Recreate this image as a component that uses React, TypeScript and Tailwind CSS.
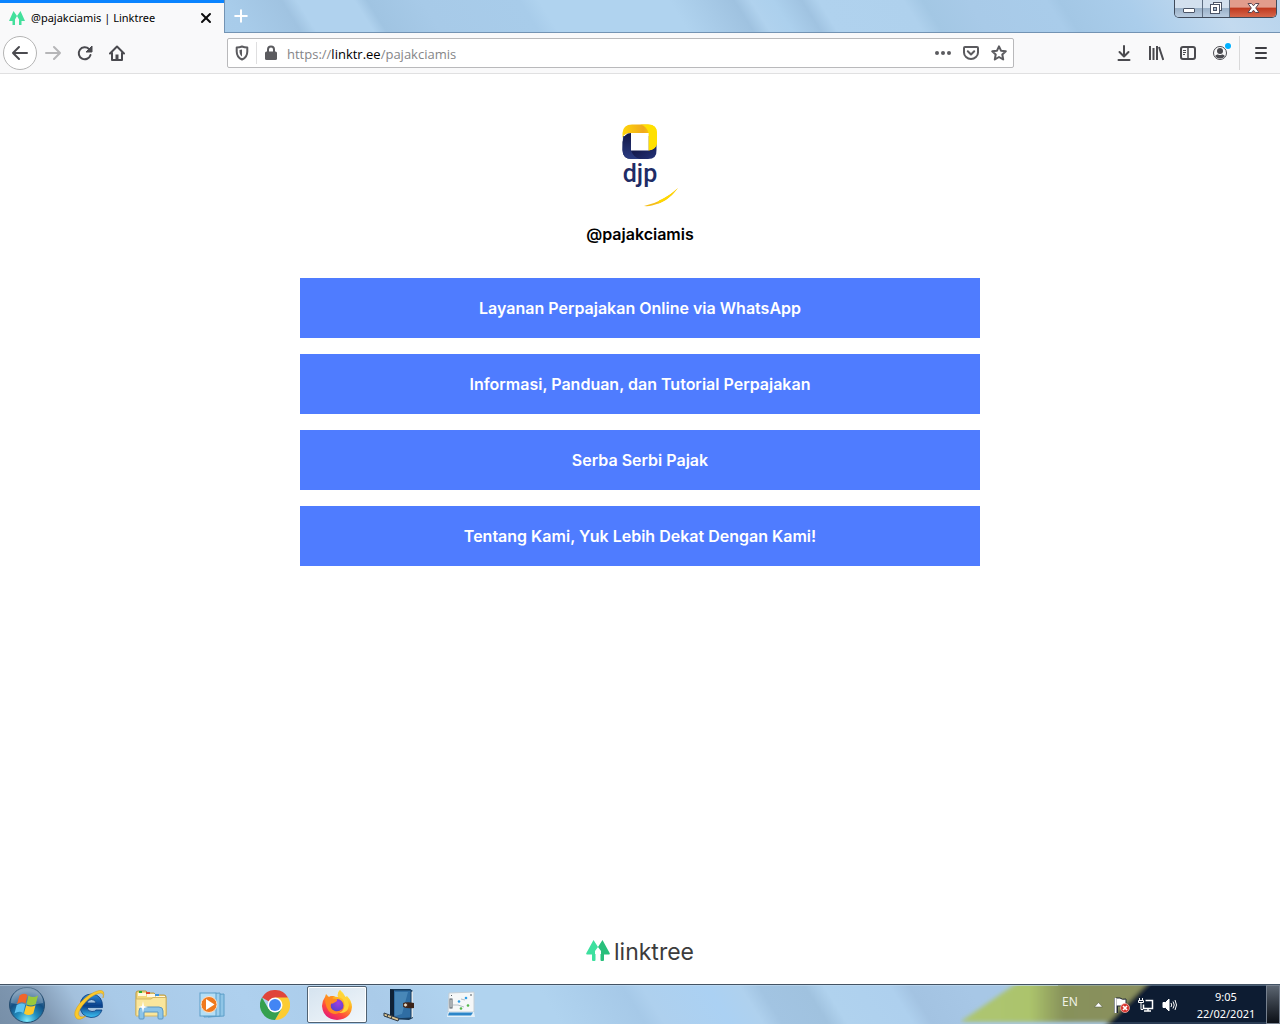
import React from 'react';
import { LuX, LuPlus } from 'react-icons/lu';

const links = [
  { title: 'Layanan Perpajakan Online via WhatsApp', href: '#whatsapp' },
  { title: 'Informasi, Panduan, dan Tutorial Perpajakan', href: '#informasi' },
  { title: 'Serba Serbi Pajak', href: '#serba-serbi' },
  { title: 'Tentang Kami, Yuk Lebih Dekat Dengan Kami!', href: '#tentang' },
];

function TreeIcon({ className }: { className?: string }) {
  return (
    <svg viewBox="0 0 24 21" className={className} aria-hidden="true">
      <path d="M7.500 0 L12 7 L9 11 V14 H9.500 V20 Q9.500 21 8.500 21 H7 Q6 21 6 20 V14.500 H1 Q-.3 14.500 .4 13 Z" fill="#3de09f" />
      <path d="M16.500 0 L23.600 13 Q24.300 14.500 23 14.500 H18 V20 Q18 21 17 21 H15.500 Q14.500 21 14.500 20 V14 H15 V11 L12 7 Z" fill="#28bf7b" />
    </svg>
  );
}

// Single-tone version used as the tab favicon
function Favicon() {
  return (
    <svg width="18" height="16" viewBox="0 0 18 16" fill="#43e09c" aria-hidden="true">
      <path d="M5.500 1 L9 6 L7 9.500 V15 H4.500 V11 H1 Z" />
      <path d="M12.500 1 L17 11 H13.500 V15 H11 V9.500 L9 6 Z" />
    </svg>
  );
}

function BackIcon() {
  return (
    <svg width="34" height="34" viewBox="0 0 34 34" fill="none">
      <circle cx="17" cy="17" r="16.500" fill="#fff" stroke="#b4b4b4" />
      <path d="M24 17 H10 M16 11 L10 17 L16 23" stroke="#4a4a4f" strokeWidth="2" strokeLinecap="round" strokeLinejoin="round" />
    </svg>
  );
}

function ForwardIcon() {
  return (
    <svg width="16" height="16" viewBox="0 0 16 16" fill="none" stroke="#b6b6b8" strokeWidth="2" strokeLinecap="round" strokeLinejoin="round">
      <path d="M1 8 H15 M9 2 L15 8 L9 14" />
    </svg>
  );
}

function ReloadIcon() {
  return (
    <svg width="16" height="16" viewBox="0 0 16 16">
      <path d="M13.500 10 A6 6 0 1 1 12 4" fill="none" stroke="#4a4a4f" strokeWidth="2" strokeLinecap="round" />
      <path d="M15 1 V7 H9 Z" fill="#4a4a4f" stroke="#4a4a4f" strokeWidth="1" strokeLinejoin="round" />
    </svg>
  );
}

function HomeIcon() {
  return (
    <svg width="16" height="16" viewBox="0 0 16 16">
      <path d="M1 8.500 L8 1.500 L15 8.500 M3 8 V15 H13 V8" fill="none" stroke="#4a4a4f" strokeWidth="2" strokeLinecap="round" strokeLinejoin="round" />
      <path d="M6.500 15 V9.500 H9.500 V15 Z" fill="#4a4a4f" />
    </svg>
  );
}

function ShieldIcon() {
  return (
    <svg width="14" height="16" viewBox="0 0 14 16">
      <path d="M7 1.500 C9 2.300 11 2.500 12.300 2.500 V6.500 C12.300 10 10.500 13 7 14.500 C3.500 13 1.700 10 1.700 6.500 V2.500 C3 2.500 5 2.300 7 1.500 Z" fill="none" stroke="#5b5b5f" strokeWidth="2" strokeLinejoin="round" />
      <path d="M7 4.500 V11.500 C5.300 10.500 4.500 8.500 4.500 6 V5 Z" fill="#5b5b5f" />
    </svg>
  );
}

function LockIcon() {
  return (
    <svg width="14" height="16" viewBox="0 0 14 16">
      <path d="M4 8 V4.500 A3 3 0 0 1 10 4.500 V8" fill="none" stroke="#5b5b5f" strokeWidth="2" />
      <rect x="1" y="6.500" width="12" height="8.500" rx="1.500" fill="#5b5b5f" />
    </svg>
  );
}

function DotsIcon() {
  return (
    <svg width="16" height="16" viewBox="0 0 16 16" fill="#5b5b5f">
      <circle cx="2" cy="8" r="2" />
      <circle cx="8" cy="8" r="2" />
      <circle cx="14" cy="8" r="2" />
    </svg>
  );
}

function PocketIcon() {
  return (
    <svg width="16" height="16" viewBox="0 0 16 16" fill="none" stroke="#5b5b5f" strokeWidth="2" strokeLinecap="round" strokeLinejoin="round">
      <path d="M2 2 H14 Q15 2 15 3 V7.500 A7 6.500 0 0 1 1 7.500 V3 Q1 2 2 2 Z" />
      <path d="M4.800 6.300 L8 9.500 L11.200 6.300" />
    </svg>
  );
}

function StarIcon() {
  return (
    <svg width="16" height="16" viewBox="0 0 16 16" fill="none" stroke="#5b5b5f" strokeWidth="2" strokeLinejoin="round">
      <path d="M8 1.300 L10 5.700 L14.800 6.300 L11.300 9.500 L12.200 14.500 L8 12 L3.800 14.500 L4.700 9.500 L1.200 6.300 L6 5.700 Z" />
    </svg>
  );
}

function DownloadIcon() {
  return (
    <svg width="16" height="16" viewBox="0 0 16 16" fill="none" stroke="#4a4a4f" strokeWidth="2" strokeLinecap="round" strokeLinejoin="round">
      <path d="M8 1 V11 M3.500 7 L8 11.500 L12.500 7 M2.500 15 H13.500" />
    </svg>
  );
}

function LibraryIcon() {
  return (
    <svg width="16" height="16" viewBox="0 0 16 16" fill="none" stroke="#4a4a4f" strokeWidth="2">
      <path d="M2 1 V15 M5.500 3 V15 M9 1 V15 M11 2 L15.300 15" />
    </svg>
  );
}

function SidebarIcon() {
  return (
    <svg width="16" height="16" viewBox="0 0 16 16" fill="none" stroke="#4a4a4f">
      <rect x="1" y="2" width="14" height="12" rx="2" strokeWidth="2" />
      <path d="M8 2 V14" strokeWidth="1.500" />
      <path d="M3 5.500 H6 M3 7.500 H6 M3 9.500 H5" />
    </svg>
  );
}

function AccountIcon() {
  return (
    <svg width="24" height="20" viewBox="0 0 24 20">
      <circle cx="12" cy="11" r="6.500" fill="none" stroke="#4a4a4f" />
      <circle cx="12" cy="9" r="3" fill="#4a4a4f" />
      <path d="M7 14 Q8.500 12 10 12.500 Q12 13.500 14 12.500 Q15.500 12 17 14 Q15 16.500 12 16.500 Q9 16.500 7 14 Z" fill="#4a4a4f" />
      <circle cx="20" cy="4" r="3.500" fill="#fff" />
      <circle cx="20" cy="4" r="3" fill="#00b0ff" />
    </svg>
  );
}

function MenuIcon() {
  return (
    <svg width="14" height="14" viewBox="0 0 14 14" stroke="#3e3e43" strokeWidth="2" strokeLinecap="round">
      <path d="M2 2 H12 M2 7 H12 M2 12 H12" />
    </svg>
  );
}

function WindowControls() {
  return (
    <div className="flex h-[18px] mr-[3px] rounded-b-[5px] border border-t-0 border-[#3f4a5a] overflow-hidden">
      <button aria-label="Minimize" className="w-7 flex items-center justify-center border-r border-[#5d6c80] bg-linear-to-b from-[#d3e0ee] from-45% via-[#9bb1c8] via-50% to-[#b9cce0]">
        <svg width="13" height="15" viewBox="0 0 13 15">
          <rect x="1.500" y="7.500" width="11" height="4" rx=".5" fill="#fff" stroke="#4c5568" />
        </svg>
      </button>
      <button aria-label="Restore" className="w-[27px] flex items-center justify-center border-r border-[#5d6c80] bg-linear-to-b from-[#d3e0ee] from-45% via-[#9bb1c8] via-50% to-[#b9cce0]">
        <svg width="13" height="13" viewBox="0 0 13 13" fill="#fff" stroke="#4c5568">
          <rect x="3.500" y=".5" width="8" height="8" />
          <rect x=".5" y="2.500" width="9" height="9" />
          <rect x="3.500" y="5.500" width="3" height="3" fill="#a9bdd2" />
        </svg>
      </button>
      <button aria-label="Close" className="w-[46px] flex items-center justify-center bg-linear-to-b from-[#e29c8c] from-40% via-[#c03a20] via-50% to-[#d6664a]">
        <svg width="13" height="14" viewBox="0 0 13 14">
          <path d="M1 1.500 H4.500 L6.500 3.800 L8.500 1.500 H12 L8.700 6 L12 10.500 H8.500 L6.500 8.200 L4.500 10.500 H1 L4.300 6 Z" fill="#fff" stroke="#5a4550" />
        </svg>
      </button>
    </div>
  );
}

function TabStrip() {
  return (
    <div className="flex h-[33px] bg-[linear-gradient(58deg,#b0d2ee_0%,#a8ccea_19%,#a0c3e1_23.200%,#b0d2ee_24.400%,#b0d2ee_28.800%,#a0c4e2_29.800%,#a7cae8_34%,#a8ccea_41.500%,#b0d3ef_43%,#b0d3ef_53%,#9fc2e0_58%,#b0d2ee_59.300%,#acd0ed_61%,#a0c3e1_63.200%,#b0d2ee_64.500%,#afd1ed_71%,#a3c7e4_72.500%,#a8cae8_76%,#a9ccea_82%,#a3c7e5_83%,#aacdeb_88%,#c3daef_95%,#b8d4ed_100%)]">
      <div className="w-56 flex items-center border-t-[3px] border-[#0a84ff] bg-[#f9f9fa] pl-2 pr-2.5">
        <Favicon />
        <span className="ml-[5px] flex-1 text-[11px] leading-4 text-black font-['Noto_Sans','Open_Sans',sans-serif]">
          @pajakciamis | Linktree
        </span>
        <button aria-label="Close tab">
          <LuX className="w-4 h-4 text-[#0c0c0d]" strokeWidth={3} />
        </button>
      </div>
      <div className="flex-1 flex justify-between border-b border-l border-[#7393b3]">
        <button aria-label="New tab" className="w-8 flex items-center justify-center">
          <LuPlus className="w-5 h-5 text-white" strokeWidth={2.4} />
        </button>
        <WindowControls />
      </div>
    </div>
  );
}

function NavBar() {
  return (
    <div className="flex items-center h-[41px] bg-[#f9f9fa] border-b border-[#e0e0e1]">
      <div className="flex items-center pl-[3px]">
        <button aria-label="Back" className="w-[34px]"><BackIcon /></button>
        <button aria-label="Forward" className="w-8 flex justify-center"><ForwardIcon /></button>
        <button aria-label="Reload" className="w-8 flex justify-center"><ReloadIcon /></button>
        <button aria-label="Home" className="w-8 flex justify-center"><HomeIcon /></button>
      </div>
      <div className="flex-1 mx-[94px] h-[30px] flex items-center rounded-xs border border-[#b9b9bb] bg-white">
        <button aria-label="Tracking protection" className="w-7 flex justify-center"><ShieldIcon /></button>
        <div className="w-px h-[22px] bg-[#dfdfe0]"></div>
        <button aria-label="Site information" className="w-7 flex justify-center"><LockIcon /></button>
        <div className="flex-1 pl-0.5 pt-px text-[13px] leading-5 text-[#858587] font-['Open_Sans','Noto_Sans',sans-serif]">
          https://<span className="text-black">linktr.ee</span>/pajakciamis
        </div>
        <div className="flex">
          <button aria-label="Page actions" className="w-7 flex justify-center"><DotsIcon /></button>
          <button aria-label="Save to Pocket" className="w-7 flex justify-center"><PocketIcon /></button>
          <button aria-label="Bookmark this page" className="w-7 flex justify-center"><StarIcon /></button>
        </div>
      </div>
      <div className="flex items-center">
        <button aria-label="Downloads" className="w-8 flex justify-center"><DownloadIcon /></button>
        <button aria-label="Library" className="w-8 flex justify-center"><LibraryIcon /></button>
        <button aria-label="Sidebars" className="w-8 flex justify-center"><SidebarIcon /></button>
        <button aria-label="Account" className="w-8 flex justify-center pb-0.5"><AccountIcon /></button>
        <div className="w-px h-[34px] ml-[3px] mr-px bg-[#d9d9da]"></div>
        <button aria-label="Open menu" className="w-[39px] flex justify-center"><MenuIcon /></button>
      </div>
    </div>
  );
}

function Avatar() {
  return (
    <svg width="96" height="96" viewBox="0 0 96 96" role="img" aria-label="djp">
      <defs>
        <linearGradient id="gold" x1="0" y1="0" x2="1" y2="0">
          <stop offset="0" stopColor="#ffd60a" />
          <stop offset=".6" stopColor="#f0a91c" />
          <stop offset="1" stopColor="#ffdf00" />
        </linearGradient>
        <linearGradient id="navy" x1="0" y1="0" x2="1" y2="1">
          <stop offset="0" stopColor="#2c3f86" />
          <stop offset=".5" stopColor="#141a4c" />
          <stop offset="1" stopColor="#24337a" />
        </linearGradient>
        <linearGradient id="side" x1="0" y1="0" x2="0" y2="1">
          <stop offset="0" stopColor="#121747" />
          <stop offset="1" stopColor="#2b3c82" />
        </linearGradient>
      </defs>
      <path d="M31 24 H64.500 V38 Q65 47 56 47 H40 Q30.500 47 30.500 38 Z" fill="url(#navy)" />
      <path d="M30.500 26 V21 Q31 12.500 40 12.500 H56 Q65 12.500 65 21 V31 Q64 38 56.500 38.500 V21 H39 Q32 21 30.500 26 Z" fill="url(#gold)" />
      <path d="M48 12.500 H56 Q65 12.500 65 21 V31 Q64 38 56.500 38.500 V21 Q55 14 48 12.500 Z" fill="#ffe000" />
      <path d="M30.500 30 Q32 21 39 21 V38.500 Q42 46 48 47 H40 Q30.500 47 30.500 38 Z" fill="url(#side)" />
      <rect x="39" y="21" width="17.500" height="17.500" fill="#fff" />
      <text x="48" y="70" textAnchor="middle" fontSize="25" fontWeight="500" fill="#1f2c66" fontFamily="Roboto, sans-serif">djp</text>
      <path d="M52 94 Q71 90 86 76 Q75 91 60 93.500 Q56 94.500 52 94 Z" fill="#f5be17" />
      <path d="M67 88.500 Q78 84 86 76 Q77 88 66 91.500 Z" fill="#ffd900" />
    </svg>
  );
}

function StartOrb() {
  return (
    <svg width="38" height="38" viewBox="0 0 38 38">
      <defs>
        <radialGradient id="orb" cx=".5" cy=".95" r=".85">
          <stop offset="0" stopColor="#7fe9fb" />
          <stop offset=".35" stopColor="#238fc0" />
          <stop offset=".7" stopColor="#134f83" />
          <stop offset="1" stopColor="#5f84a6" />
        </radialGradient>
      </defs>
      <circle cx="19" cy="19" r="17.500" fill="url(#orb)" stroke="#254d70" />
      <path d="M3 17 A16 16 0 0 1 35 17 Q19 21 3 17 Z" fill="#fff" opacity=".25" />
      <path d="M11.500 9.500 Q15.500 6.500 19.500 9 L17.500 17.500 Q13.500 15 9 18 Z" fill="#f0652a" />
      <path d="M20.500 9.500 Q25 12.500 30 9.500 L27.800 18 Q23 21 18.500 18 Z" fill="#9ac93c" />
      <path d="M8.700 19 Q13.300 16 17.300 18.700 L15.200 27 Q11 24.500 6.500 27.500 Z" fill="#5ec3f2" />
      <path d="M18.200 19.200 Q23 22 27.500 19.200 L25.300 27.500 Q20.500 30.500 16 27.500 Z" fill="#fdc92c" />
    </svg>
  );
}

function ExplorerBrowserIcon() {
  return (
    <svg width="34" height="34" viewBox="0 0 34 34">
      <defs>
        <linearGradient id="ie" x1="0" y1="0" x2="0" y2="1">
          <stop offset="0" stopColor="#2f8fdc" />
          <stop offset=".5" stopColor="#0a3f8a" />
          <stop offset="1" stopColor="#3cc4f5" />
        </linearGradient>
      </defs>
      <path d="M30.500 19.500 H15 Q15.500 23.500 20 23.500 Q23 23.500 24 22 H30 Q27.500 29.500 19 29.500 Q8 28.500 8 17.500 Q9 6 20 6 Q31 7 30.500 19.500 Z M15 15 H24 Q23.500 11.500 19.500 11.500 Q15.500 11.500 15 15 Z" fill="url(#ie)" stroke="#0b3f80" strokeWidth=".8" />
      <path d="M4 30 Q0 25 8 15 Q17 5 27 2.500 Q34 1.500 31 10 Q32.500 3.500 26 5.500 Q18 8 11 17 Q4 26 8 28.500 Q10 29.500 14 28 Q7 33.500 4 30 Z" fill="#fbc92c" stroke="#d39a18" strokeWidth=".5" />
    </svg>
  );
}

function FolderIcon() {
  return (
    <svg width="34" height="32" viewBox="0 0 34 32">
      <path d="M2 4 Q2 2 4 2 H12 L14 4 H20 L22 6 H30 Q32 6 32 8 V26 H2 Z" fill="#f2d77c" stroke="#b99a44" />
      <path d="M4 4 H12 V7 H4 Z M13 5 H21 V8 H13 Z M22 7 H31 V10 H22 Z" fill="#fff8e0" />
      <rect x="5" y="2" width="3" height="2" fill="#2ea836" />
      <rect x="12" y="3" width="4" height="2" fill="#e0452a" />
      <rect x="21" y="5" width="4" height="2" fill="#3b93de" />
      <path d="M2 10 H17 L19 8.500 H32 V27 H2 Z" fill="#fae69c" stroke="#d4b765" />
      <path d="M5 29 V22 Q5 18 9 18 H25 Q29 18 29 22 V29 Q29 30 28 30 H25 Q24 30 24 29 V23 H10 V29 Q10 30 9 30 H6 Q5 30 5 29 Z" fill="#8cc4e8" stroke="#5a97c4" />
      <path d="M9 12 L10 17 L14 18 L10 19 L9 24 L8 19 L4 18 L8 17 Z" fill="#fff" />
    </svg>
  );
}

function MediaPlayerIcon() {
  return (
    <svg width="30" height="28" viewBox="0 0 30 28">
      <path d="M10 4 L26 3 V25 L10 26 Z" fill="#8fc5e6" stroke="#5c9ec8" />
      <path d="M6 3 L22 2 V25 L6 26 Z" fill="#9dd0ee" stroke="#5c9ec8" />
      <rect x="2" y="2" width="16" height="23" fill="#b4def5" stroke="#5c9ec8" />
      <circle cx="11" cy="13.500" r="8" fill="#f07a1e" stroke="#fbe3cd" />
      <path d="M8 8 L16.500 13.500 L8 19 Z" fill="#fff" />
    </svg>
  );
}

function ChromeIcon() {
  return (
    <svg width="30" height="30" viewBox="0 0 30 30">
      <path d="M15 15 L2 7.500 A15 15 0 0 1 28 7.500 Z" fill="#e0453a" />
      <path d="M15 7.500 H28 A15 15 0 0 1 15 30 L21.500 18.700 Z" fill="#fccc32" />
      <path d="M2 7.500 A15 15 0 0 0 15 30 L21.500 18.700 L15 15 L8.500 18.700 Z" fill="#34a04f" />
      <circle cx="15" cy="15" r="7.500" fill="#fff" />
      <circle cx="15" cy="15" r="6" fill="#4285f4" />
    </svg>
  );
}

function FirefoxIcon() {
  return (
    <svg width="32" height="32" viewBox="0 0 32 32">
      <defs>
        <linearGradient id="fox" x1=".85" y1=".1" x2=".3" y2="1">
          <stop offset="0" stopColor="#fff04a" />
          <stop offset=".35" stopColor="#ffab1f" />
          <stop offset=".7" stopColor="#ff4a3c" />
          <stop offset="1" stopColor="#e3197b" />
        </linearGradient>
        <radialGradient id="globe" cx=".6" cy=".3" r=".8">
          <stop offset="0" stopColor="#a03de0" />
          <stop offset="1" stopColor="#4a43c8" />
        </radialGradient>
      </defs>
      <path d="M19 1 Q23 4 24.500 8 L26 7 Q31 12 31 18 Q30 30 16 31 Q2 30 1 17 Q1 12 4 8 L5 5 L8 8 Q10 6.500 13 7 Q14 8 17 8 Q16 4 19 1 Z" fill="url(#fox)" />
      <circle cx="16" cy="16.500" r="6.500" fill="url(#globe)" />
      <path d="M4 8 L8 8 Q10 6.500 13 7 Q11 8 11.500 10 H16 Q17 12 13.500 13.500 Q12 15 10 14.500 Q8 20 14 22 Q18 23 21 20 Q18 27 10 24 Q4 20 4 8 Z" fill="#ff8a22" />
      <path d="M17 8 Q24 9 23.500 17 Q23 22 18 24 Q27 25 28 16 Q27 10 23 7 Q20 4 19 1 Q16 4 17 8 Z" fill="#ffd338" />
    </svg>
  );
}

function NotebookIcon() {
  return (
    <svg width="34" height="34" viewBox="0 0 34 34">
      <path d="M8 1 L28 1 L31 3 V30 L27 32 L9 31 Z" fill="#173652" />
      <path d="M29 4 L31 3 V29 L29 30 Z" fill="#dfe7ec" />
      <path d="M11 2 L29 2 V30 L11 31 Z" fill="#2f6da3" stroke="#173a5c" />
      <path d="M13 4 L26 4 L20 26 L13 28 Z" fill="#5c9dca" opacity=".55" />
      <path d="M8 1 L12 2 V31 L8 29 Z" fill="#0f2236" />
      <path d="M21 15 Q26 13.500 32 15 V20 Q26 21 21 19 Z" fill="#3b241a" />
      <circle cx="23.500" cy="17" r="2" fill="#e6dccb" stroke="#4a2b1d" />
      <path d="M2 25 L17 30.500 L16 33 L2 28 Z" fill="#d9c28d" stroke="#2d3845" strokeWidth="1" />
      <path d="M6 26.500 L5 29 M10 28 L9 30.500" stroke="#2d3845" />
    </svg>
  );
}

function SketchIcon() {
  return (
    <svg width="30" height="28" viewBox="0 0 30 28">
      <path d="M3 2 L28 1 V21 H2 Z" fill="#f5f7f8" stroke="#c3ced6" />
      <path d="M2 21 H28 L29 26 H1 Z" fill="#e4f0f8" />
      <path d="M3 21.500 H27 L25 24.500 H2 Z" fill="#2c86c9" />
      <rect x="4" y="8" width="2" height="9" fill="#fff" stroke="#555e66" />
      <path d="M7 14 H12 L18 16 M15 8 L19 9" stroke="#b5bfc6" fill="none" />
      <circle cx="13" cy="10.500" r="1.300" fill="#2d9ce6" />
      <circle cx="20" cy="7" r="1.300" fill="#2d9ce6" />
      <circle cx="15" cy="17.500" r="1.300" fill="#53b848" />
      <circle cx="22" cy="14.500" r="1.300" fill="#53b848" />
      <path d="M5 4.500 H6 M24 4 H26" stroke="#555e66" />
    </svg>
  );
}

function TrayBackground() {
  return (
    <svg className="absolute right-0 top-0 w-80 h-full" viewBox="0 0 320 39" preserveAspectRatio="none" aria-hidden="true">
      <defs>
        <linearGradient id="leaf" x1="0" y1="0" x2="1" y2="0">
          <stop offset="0" stopColor="#adc672" />
          <stop offset=".35" stopColor="#acc46c" />
          <stop offset=".52" stopColor="#87915a" />
          <stop offset="1" stopColor="#8b905f" />
        </linearGradient>
        <filter id="soft">
          <feGaussianBlur stdDeviation="2" />
        </filter>
      </defs>
      <g filter="url(#soft)">
        <path d="M0 37 L60 -4 H200 L150 37 Z" fill="url(#leaf)" />
        <path d="M143 43 L190 -4 H326 V43 Z" fill="#101a30" />
      </g>
      <path d="M0 38 H320 M50 .5 H320" stroke="#b5d2ea" strokeOpacity=".35" />
    </svg>
  );
}

const taskbarApps = [
  { name: 'Internet Explorer', icon: <ExplorerBrowserIcon /> },
  { name: 'Windows Explorer', icon: <FolderIcon /> },
  { name: 'Media Player', icon: <MediaPlayerIcon /> },
  { name: 'Chrome', icon: <ChromeIcon /> },
  { name: 'Firefox', icon: <FirefoxIcon />, active: true },
  { name: 'Notebook', icon: <NotebookIcon /> },
  { name: 'Sketch', icon: <SketchIcon /> },
];

function Taskbar() {
  return (
    <div className="relative flex h-10 border-t border-[#435364] font-['Noto_Sans','Open_Sans',sans-serif] bg-[linear-gradient(58deg,#778fa8_0%,#8199b3_4%,#a3c0dc_7%,#a9cae8_10%,#aed0ee_20%,#aacbe9_30%,#b0d3ef_36%,#b0d3ef_43%,#a6c9e8_49.500%,#aed0ee_51%,#abd1f3_56%,#afd1ee_58.500%,#a2c4e2_60%,#a0c2df_63.500%,#b0d2ee_65%,#aed0ee_70%,#a3c3e2_71.500%,#a7c7e6_76%)]">
      <TrayBackground />
      <div className="relative flex-1 flex items-center border-t border-[#c9dff1]/50">
        <button aria-label="Start" className="w-[59px] flex pl-2"><StartOrb /></button>
        <div className="flex h-full gap-0.5 pb-px">
          {taskbarApps.map((app) => (
            <button
              key={app.name}
              aria-label={app.name}
              className={
                app.active
                  ? 'w-[60px] flex items-center justify-center rounded-xs border border-[#506273] bg-linear-to-br from-[#d5e3ef] to-[#f2f7fb] ring-1 ring-inset ring-white'
                  : 'w-[60px] flex items-center justify-center'
              }
            >
              {app.icon}
            </button>
          ))}
        </div>
      </div>
      <div className="relative flex items-center text-white">
        <button className="w-6 mr-1 mb-1.5 text-[12px] leading-4 text-[#f0f2e6]">EN</button>
        <button aria-label="Show hidden icons" className="w-6 flex justify-center">
          <svg width="9" height="6" viewBox="0 0 9 6">
            <path d="M4.500 .5 L8.500 5 H.5 Z" fill="#fff" stroke="#4b5138" strokeWidth=".5" />
          </svg>
        </button>
        <button aria-label="Action Center" className="w-6 flex justify-center">
          <svg width="18" height="18" viewBox="0 0 18 18">
            <path d="M3 2 V17" stroke="#1d2430" strokeWidth="4" />
            <path d="M3 2 H7 Q9 4 13 3 V10 H3 Z" fill="#fff" stroke="#1d2430" />
            <path d="M2.500 2 V17" stroke="#fff" strokeWidth="2" />
            <circle cx="12" cy="12" r="4.500" fill="#d8322c" stroke="#f6c4c0" strokeWidth=".7" />
            <path d="M10 10 L14 14 M14 10 L10 14" stroke="#fff" strokeWidth="1.700" />
          </svg>
        </button>
        <button aria-label="Network" className="w-6 flex justify-center">
          <svg width="16" height="16" viewBox="0 0 16 16" fill="none" stroke="#fff">
            <path d="M1.500 1 V3 M4.500 1 V3 M.5 3.500 H5.500 V5.500 H.5 Z M3 6 V12.500 H5" />
            <path d="M7.500 3.500 H14.500 V11.500 H5.500 V7.500" strokeWidth="1.500" />
            <path d="M6 14 H13 M10 11 V14" strokeWidth="1.500" />
          </svg>
        </button>
        <button aria-label="Volume" className="w-6 flex justify-center">
          <svg width="16" height="16" viewBox="0 0 16 16" fill="none" stroke="#fff">
            <path d="M1 5.500 H3.500 L7 2 V14 L3.500 10.500 H1 Z" fill="#fff" />
            <path d="M9 6 Q10.500 8 9 10 M11 4.500 Q13.500 8 11 11.500 M13 3 Q16 8 13 13" />
          </svg>
        </button>
        <div className="w-[84px] pl-1 text-center text-[11px] leading-[17px]">
          <div>9:05</div>
          <div>22/02/2021</div>
        </div>
        <button aria-label="Show desktop" className="w-3.5 h-full border border-[#76808e] bg-linear-to-b from-[#5c6672] to-[#0c1017]"></button>
      </div>
    </div>
  );
}

export default function App() {
  return (
    <div className="min-h-screen flex flex-col bg-white">
      {/* Browser chrome */}
      <TabStrip />
      <NavBar />

      {/* Profile page */}
      <main className="flex-1 flex flex-col items-center px-4 pt-[38px] font-['Inter',sans-serif]">
        <Avatar />
        <h1 className="mt-3.5 text-[16px] leading-6 font-semibold text-black">@pajakciamis</h1>
        <div className="mt-8 w-full max-w-[680px] flex flex-col gap-4">
          {links.map((link) => (
            <a
              key={link.href}
              href={link.href}
              className="h-[60px] flex items-center justify-center bg-[#4f7cff] text-white text-[16px] leading-6 font-semibold"
            >
              {link.title}
            </a>
          ))}
        </div>
        <a href="#linktree" className="mt-auto mb-3.5 flex items-end gap-1">
          <TreeIcon className="w-6 h-[21px] mb-[9px]" />
          <span className="text-[23px] leading-9 text-[#3c3c3c]">linktree</span>
        </a>
      </main>

      <Taskbar />
    </div>
  );
}
